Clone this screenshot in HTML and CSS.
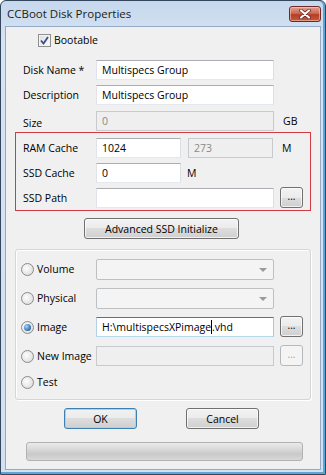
FILE: index.html
```html
<!DOCTYPE html>
<html lang="en">
<head>
  <meta charset="UTF-8" />
  <title>CCBoot Disk Properties</title>
  <link rel="stylesheet" href="styles.css">
</head>
<body>
  <div class="window">
    <div class="titlebar">
      <span class="title">CCBoot Disk Properties</span>
      <span class="close">
        <svg width="14" height="10" viewBox="0 0 14 10">
          <path d="M3 1.5 L11 8.5 M11 1.5 L3 8.5" stroke="#5a2020" stroke-width="3.6" stroke-linecap="round"/>
          <path d="M3 1.5 L11 8.5 M11 1.5 L3 8.5" stroke="#ffffff" stroke-width="2.2" stroke-linecap="round"/>
        </svg>
      </span>
    </div>

    <div class="client">
      <div class="check-row">
        <span class="checkbox">
          <svg width="9" height="9" viewBox="0 0 9 9"><path d="M1 4.5 L3.5 7.5 L8 1" fill="none" stroke="#3c4f8c" stroke-width="1.8"/></svg>
        </span>
        <span>Bootable</span>
      </div>

      <div class="row first">
        <span class="lbl">Disk Name *</span>
        <div class="field">Multispecs Group</div>
      </div>
      <div class="row">
        <span class="lbl">Description</span>
        <div class="field">Multispecs Group</div>
      </div>
      <div class="row size">
        <span class="lbl low">Size</span>
        <div class="field disabled">0</div>
        <span class="unit">GB</span>
      </div>

      <div class="redbox">
        <div class="row">
          <span class="lbl">RAM Cache</span>
          <div class="field short">1024</div>
          <div class="field short disabled second">273</div>
          <span class="unit">M</span>
        </div>
        <div class="row">
          <span class="lbl">SSD Cache</span>
          <div class="field short">0</div>
          <span class="unit near">M</span>
        </div>
        <div class="row">
          <span class="lbl">SSD Path</span>
          <div class="field"></div>
          <span class="btn dots">...</span>
        </div>
      </div>

      <div class="center">
        <span class="btn adv">Advanced SSD Initialize</span>
      </div>

      <div class="group">
        <div class="grow">
          <span class="opt"><span class="radio"></span>Volume</span>
          <div class="field combo"><span class="arrow"></span></div>
        </div>
        <div class="grow">
          <span class="opt"><span class="radio"></span>Physical</span>
          <div class="field combo"><span class="arrow"></span></div>
        </div>
        <div class="grow">
          <span class="opt"><span class="radio on"></span>Image</span>
          <div class="field focus">H:\multispecsXPimage<span class="caret"></span>.vhd</div>
          <span class="btn dots">...</span>
        </div>
        <div class="grow">
          <span class="opt"><span class="radio"></span>New Image</span>
          <div class="field disabled"></div>
          <span class="btn dots off">...</span>
        </div>
        <div class="grow test">
          <span class="opt"><span class="radio"></span>Test</span>
        </div>
      </div>

      <div class="actions">
        <span class="btn ok">OK</span>
        <span class="btn">Cancel</span>
      </div>

      <div class="progress"></div>
    </div>
  </div>
</body>
</html>
```

FILE: styles.css
```css
body {
  margin: 0;
  background: #ffffff;
  font-family: "Open Sans", "Noto Sans", sans-serif;
  font-size: 10.5px;
  color: #000;
}
.window {
  width: 326px;
  height: 475px;
  box-sizing: border-box;
  border: 1px solid #34465c;
  border-radius: 6px 6px 0 0;
  background: linear-gradient(#c6d8ee, #d6e3f2 40px, #d3e0ef);
  display: flex;
  flex-direction: column;
  box-shadow: inset 0 -2px 0 #5aa6d6, inset -2px 0 0 #5aa6d6;
}
.titlebar {
  height: 25px;
  flex: none;
  display: flex;
  align-items: center;
  justify-content: space-between;
  padding: 0 4px 0 6px;
}
.title {
  font-size: 11.5px;
  color: #1b1b1b;
}
.close {
  width: 32px;
  height: 16px;
  box-sizing: border-box;
  border: 1px solid #6e2a2a;
  border-radius: 3px;
  background: linear-gradient(#e3a08f, #cc6a55 45%, #b63c27 55%, #c75a3c);
  display: flex;
  align-items: center;
  justify-content: center;
  box-shadow: inset 0 0 0 1px rgba(255, 220, 200, 0.5);
}
.client {
  flex: 1;
  margin: 0 4px 4px 4px;
  border: 1px solid #93aac4;
  background: #f0f0f0;
  padding: 3px 9px 0;
}

.check-row {
  height: 20px;
  display: flex;
  align-items: center;
  padding-left: 23px;
}
.checkbox {
  width: 13px;
  height: 13px;
  box-sizing: border-box;
  border: 1px solid #8f8f8f;
  background: linear-gradient(135deg, #dcdcdc, #fdfdfd);
  box-shadow: inset 0 0 0 1px #f4f4f4;
  display: flex;
  align-items: center;
  justify-content: center;
  margin-right: 3px;
}

.row {
  display: flex;
  align-items: center;
  height: 20px;
  padding-left: 8px;
  margin-top: 5px;
}
.row.first {
  margin-top: 10px;
}
.row.size {
  margin-top: 6px;
}
.lbl {
  width: 73px;
  flex: none;
}
.lbl.low {
  padding-top: 4px;
}
.field {
  width: 178px;
  height: 20px;
  box-sizing: border-box;
  flex: none;
  border: 1px solid #abadb3;
  border-color: #abadb3 #dbdfe6 #e3e9ef #e2e3ea;
  background: #fff;
  padding: 0 5px;
  line-height: 18px;
  white-space: nowrap;
  position: relative;
}
.field.short {
  width: 85px;
}
.field.second {
  margin-left: 7px;
}
.field.disabled {
  background: #efefef;
  border-color: #c8cbce;
  color: #8a8a8a;
}
.field.focus {
  border-color: #3d7bad #a4c9e3 #b7d9ed #b5cfe7;
}
.caret {
  display: inline-block;
  width: 1px;
  height: 14px;
  background: #000;
  vertical-align: -3px;
}
.unit {
  margin-left: 9px;
}
.unit.near {
  margin-left: 6px;
}

.redbox {
  margin-top: 1px;
  border: 1px solid #d23a44;
  padding: 0 0 2px 7px;
}
.redbox .row {
  padding-left: 0;
}

.btn {
  display: inline-flex;
  align-items: center;
  justify-content: center;
  box-sizing: border-box;
  height: 21px;
  border: 1px solid #707070;
  border-radius: 3px;
  background: linear-gradient(#f2f2f2, #ebebeb 50%, #dddddd 50%, #cfcfcf);
  box-shadow: inset 0 0 0 1px rgba(255, 255, 255, 0.7);
  color: #000;
}
.btn.dots {
  width: 23px;
  height: 21px;
  margin-left: 6px;
  margin-top: -1px;
  font-size: 10px;
  padding-bottom: 3px;
}
.btn.dots.off {
  border-color: #b5b9bc;
  background: #f4f4f4;
  color: #a0a0a0;
  box-shadow: none;
}
.center {
  display: flex;
  justify-content: center;
  margin-top: 7px;
  padding-right: 3px;
}
.btn.adv {
  width: 155px;
}

.group {
  margin-top: 10px;
  border: 1px solid #d5d5d5;
  border-radius: 3px;
  box-shadow: inset 1px 1px 0 #fff, 1px 1px 0 #fff;
  padding: 9px 0 7px 5px;
}
.grow {
  display: flex;
  align-items: center;
  height: 20px;
  margin-bottom: 9px;
}
.grow.test {
  margin-top: -3px;
  margin-bottom: 0;
}
.opt {
  width: 75px;
  flex: none;
  display: flex;
  align-items: center;
  white-space: nowrap;
}
.radio {
  width: 13px;
  height: 13px;
  box-sizing: border-box;
  border-radius: 50%;
  border: 1px solid #8b8b8b;
  background: radial-gradient(circle at 40% 40%, #fdfdfd, #d6d6d6);
  margin-right: 3px;
  position: relative;
  flex: none;
}
.radio.on::after {
  content: "";
  position: absolute;
  left: 2px;
  top: 2px;
  width: 7px;
  height: 7px;
  border-radius: 50%;
  background: radial-gradient(circle at 35% 35%, #a8d4f5, #2b6cb0 70%, #1b4f8a);
}
.field.combo {
  background: #f4f4f4;
  border-color: #bcc0c3;
  border-radius: 2px;
  height: 21px;
}
.arrow {
  position: absolute;
  right: 6px;
  top: 8px;
  border-left: 4px solid transparent;
  border-right: 4px solid transparent;
  border-top: 4px solid #9a9a9a;
}

.actions {
  display: flex;
  gap: 49px;
  padding-left: 49px;
  margin-top: 8px;
}
.actions .btn {
  width: 73px;
}
.btn.ok {
  border-color: #3c7fb1;
  box-shadow: inset 0 0 0 1px #9fd5f5;
}

.progress {
  margin: 13px 0 0 11px;
  width: 277px;
  height: 19px;
  box-sizing: border-box;
  border: 1px solid #b2b2b2;
  border-radius: 3px;
  background: linear-gradient(#eaeaea, #dadada 35%, #c9c9c9 65%, #d8d8d8);
}
```
